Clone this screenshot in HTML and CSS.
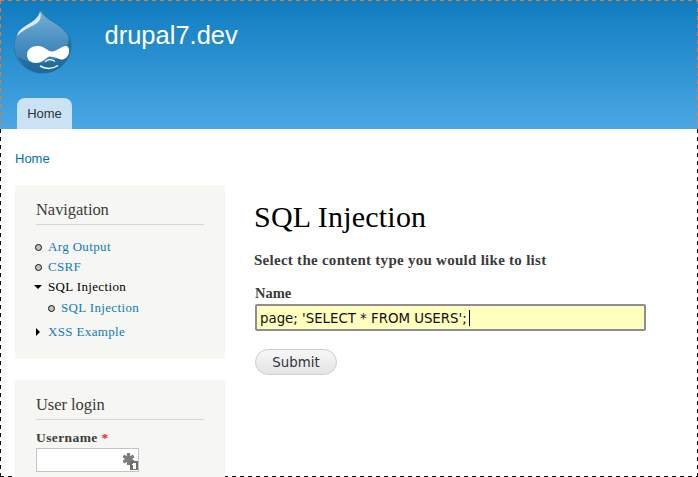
FILE: index.html
```html
<!DOCTYPE html>
<html lang="en">
<head>
<meta charset="utf-8">
<title>SQL Injection | drupal7.dev</title>
<link rel="stylesheet" href="styles.css">
</head>
<body>
<div class="page">
  <header class="site-header">
    <div class="branding">
      <svg class="logo" width="58" height="66" viewBox="14 8 58 66" aria-label="Drupal logo">
        <defs>
          <linearGradient id="drop" x1="0" y1="0" x2="0" y2="1">
            <stop offset="0" stop-color="#7ab0d8"/>
            <stop offset="0.5" stop-color="#4a90c2"/>
            <stop offset="1" stop-color="#2a78ab"/>
          </linearGradient>
        </defs>
        <path d="M41 9 C41.500 14 46 17 51 20.500 C62 27 71 34 71 45 C71 61 58 73 43 73 C27 73 14 61 14 45 C14 32 24 26 32 21.500 C36 19 40 15 41 9 Z" fill="url(#drop)" stroke="#1d6696" stroke-width="0.600"/>
        <path d="M40 11 C39 17 34 21 27 25 C22 28 18 31 17 36 C22 31 28 28 34 25 C40 22 42 18 40 11 Z" fill="#e6f1f8" opacity="0.900"/>
        <path d="M42 73 C58 73 71 61 71 45 C71 42 70 38 69 36 C68 52 56 63 40 63 C30 63 23 60 18 57 C23 67 32 73 42 73 Z" fill="#16608f" opacity="0.600"/>
        <path d="M27 55 C27 49 32 46 38 46 C44 46 48 51.500 52 51.500 C56 51.500 62 46 66 46 C69 46 69.500 50 69 53 C68 57 64 60 61 59.500 C58 59 54 56.500 50 56.500 C47 56.500 43 63 36 63 C31 63 27 60 27 55 Z" fill="#ffffff"/>
        <path d="M45 62 C47 59 52 59 55 61.500" fill="none" stroke="#ffffff" stroke-width="1.200"/>
        <path d="M40 66 C45 69 52 69.500 58 65.500" fill="none" stroke="#ffffff" stroke-width="1.500"/>
      </svg>
      <div class="site-name">drupal7.dev</div>
    </div>
    <nav class="tabs"><a class="tab" href="#">Home</a></nav>
  </header>
  <div class="body-wrap">
    <div class="breadcrumb"><a href="#">Home</a></div>
    <div class="columns">
      <aside class="sidebar">
        <section class="block">
          <h2 class="block-title">Navigation</h2>
          <ul class="menu">
            <li class="item leaf"><a href="#">Arg Output</a></li>
            <li class="item leaf"><a href="#">CSRF</a></li>
            <li class="item expanded"><a class="active" href="#">SQL Injection</a>
              <ul class="submenu">
                <li class="item leaf"><a href="#">SQL Injection</a></li>
              </ul>
            </li>
            <li class="item collapsed"><a href="#">XSS Example</a></li>
          </ul>
        </section>
        <section class="block">
          <h2 class="block-title login-title">User login</h2>
          <div class="login-label">Username <span class="req">*</span></div>
          <div class="login-input">
            <svg class="key-icon" width="15" height="17" viewBox="0 0 15 17" aria-hidden="true">
              <g stroke="#7d7d7d" stroke-width="3.200" stroke-linecap="butt">
                <line x1="5.500" y1="0" x2="5.500" y2="12"/>
                <line x1="0.300" y1="3" x2="10.700" y2="9"/>
                <line x1="0.300" y1="9" x2="10.700" y2="3"/>
              </g>
              <rect x="7" y="8" width="8" height="9" fill="#6e6e6e"/>
              <rect x="10" y="10" width="3" height="6" fill="#ffffff"/>
              <rect x="9" y="11" width="1" height="1" fill="#ffffff"/>
            </svg>
          </div>
        </section>
      </aside>
      <main class="content">
        <h1 class="page-title">SQL Injection</h1>
        <p class="lead">Select the content type you would like to list</p>
        <div class="field-label">Name</div>
        <div class="text-field">page; 'SELECT * FROM USERS';<span class="caret"></span></div>
        <button class="submit" type="button">Submit</button>
      </main>
    </div>
  </div>
</div>
</body>
</html>
```

FILE: styles.css
```css
* { box-sizing: border-box; }
html, body { margin: 0; padding: 0; background: #fff; }
body { font-family: "Liberation Serif", serif; color: #3b3b3b; overflow: hidden; }
a { text-decoration: none; color: #0071b3; }

.page { width: 698px; height: 477px; overflow: hidden; }

.site-header {
  --dash: #e8792e;
  height: 129px;
  background:
    repeating-linear-gradient(to right, var(--dash) 0 4px, transparent 4px 8px) top left / 100% 1px no-repeat,
    repeating-linear-gradient(to bottom, var(--dash) 0 4px, transparent 4px 8px) top left / 1px 100% no-repeat,
    repeating-linear-gradient(to bottom, var(--dash) 0 4px, transparent 4px 8px) top right / 1px 100% no-repeat,
    linear-gradient(to bottom, #0f7cc0 0%, #4aa8e3 100%);
  display: flex;
  flex-direction: column;
  justify-content: space-between;
}
.branding { display: flex; align-items: flex-start; padding: 8px 0 0 14px; }
.logo { display: block; }
.site-name {
  margin: 10px 0 0 32.500px;
  font: 25.500px/34px "Liberation Sans", sans-serif;
  color: #fff;
}
.tabs { padding-left: 17px; display: flex; }
.tab {
  width: 55px;
  height: 31px;
  background: #c9e3f5;
  border-radius: 8px 8px 0 0;
  color: #333;
  font: 13px/31px "Liberation Sans", sans-serif;
  text-align: center;
}

.body-wrap {
  --dash: #111;
  height: 348px;
  background:
    repeating-linear-gradient(to bottom, var(--dash) 0 4px, transparent 4px 8px) top left / 1px 100% no-repeat,
    repeating-linear-gradient(to bottom, var(--dash) 0 4px, transparent 4px 8px) top right / 1px 100% no-repeat,
    repeating-linear-gradient(to right, var(--dash) 0 4px, transparent 4px 8px) bottom left / 100% 1px no-repeat;
  padding: 22px 15px 0;
  overflow: hidden;
}
.breadcrumb { font: 13px/16px "Liberation Sans", sans-serif; height: 34px; }
.columns { display: flex; }
.sidebar { width: 210px; flex: none; display: flex; flex-direction: column; gap: 21px; }
.block { background: #f6f6f2; padding: 15px 21px 15px; }
.block-title {
  margin: 0 0 14px;
  padding-bottom: 5px;
  border-bottom: 1px solid #d6d6d6;
  font-weight: normal;
  font-size: 16.500px;
  line-height: 19px;
  letter-spacing: -0.050px;
  color: #3b3b3b;
}
.login-title { margin-bottom: 10px; }
.menu, .submenu { list-style: none; margin: 0; padding: 0; }
.menu { font-size: 13px; line-height: 16px; letter-spacing: 0.350px; }
.item { position: relative; padding-left: 12px; margin-bottom: 4px; }
.submenu { margin-top: 5px; margin-bottom: 8px; padding-left: 1px; }
.submenu .item { margin-bottom: 0; }
.item > a { color: #0f7cc0; }
.item > a.active { color: #000; }
.leaf::before {
  content: "";
  position: absolute;
  left: -1px;
  top: 5px;
  width: 5px;
  height: 5px;
  border: 1px solid #111;
  border-radius: 50%;
  background: #c4c4c4;
}
.expanded::before {
  content: "";
  position: absolute;
  left: -2px;
  top: 6px;
  border-style: solid;
  border-width: 4px 4px 0;
  border-color: #000 transparent transparent;
}
.collapsed::before {
  content: "";
  position: absolute;
  left: 0;
  top: 4px;
  border-style: solid;
  border-width: 4px 0 4px 4px;
  border-color: transparent transparent transparent #000;
}
.login-label { font-size: 13.500px; line-height: 16px; font-weight: bold; letter-spacing: 0.400px; margin-bottom: 2px; }
.req { color: #f0202a; }
.login-input {
  position: relative;
  width: 103px;
  height: 24px;
  border: 1px solid #c4c4c4;
  background: #fff;
}
.key-icon { position: absolute; right: 0; top: 4px; }

.content { flex: 1; padding: 14px 0 0 30px; }
.page-title {
  margin: 0 0 0 -1px;
  font-weight: normal;
  font-size: 30px;
  line-height: 36px;
  letter-spacing: 0.200px;
  color: #000;
}
.lead { margin: 16px 0 0 -1px; font-size: 15px; line-height: 18px; font-weight: bold; color: #3b3b3b; letter-spacing: 0.270px; }
.field-label { margin-top: 15px; font-size: 14.500px; line-height: 18px; font-weight: bold; color: #3b3b3b; }
.text-field {
  margin-top: 2px;
  width: 391px;
  height: 27px;
  border: 2px solid #8f8f8f;
  border-radius: 2px;
  background: #ffffbe;
  color: #111;
  font: 13.330px/25px "DejaVu Sans", sans-serif;
  padding-left: 3px;
  white-space: nowrap;
}
.caret { display: inline-block; width: 1px; height: 16px; margin-left: 2px; background: #000; vertical-align: -3px; }
.submit {
  display: block;
  margin-top: 18px;
  width: 82px;
  height: 26px;
  padding: 2px 0 0;
  border: 1px solid #cfcfcf;
  border-radius: 13px;
  background: linear-gradient(to bottom, #f7f7f7, #e4e4e4);
  color: #333;
  font: 13.330px/22px "DejaVu Sans", sans-serif;
}
```
